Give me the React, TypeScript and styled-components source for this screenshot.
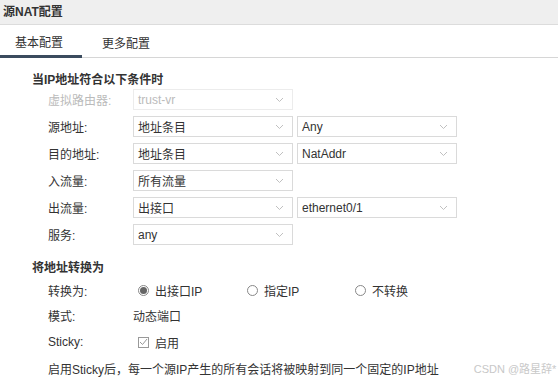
import styled, { createGlobalStyle } from "styled-components";

// 全局样式
const GlobalStyle = createGlobalStyle`
  html, body {
    margin: 0;
    padding: 0;
    background: #fff;
  }
  body {
    font-family: "Liberation Sans", "Noto Sans CJK SC", sans-serif;
    font-size: 12px;
    color: #333;
  }
`;

const Chevron = () => (
  <svg width="9" height="6" viewBox="0 0 9 6">
    <path d="M1 1 L4.5 4.5 L8 1" fill="none" stroke="#c0c0c0" strokeWidth="1" />
  </svg>
);

type SelectProps = { value: string; disabled?: boolean };

function Select({ value, disabled }: SelectProps) {
  return (
    <SelectBox $disabled={disabled}>
      <span>{value}</span>
      <Chevron />
    </SelectBox>
  );
}

export default function App() {
  return (
    <Page>
      <GlobalStyle />
      <Header>源NAT配置</Header>

      <Tabs>
        <Tab $active>基本配置</Tab>
        <Tab>更多配置</Tab>
      </Tabs>

      <Section>
        <SectionTitle>当IP地址符合以下条件时</SectionTitle>
        <FormRows>
          <Row>
            <Label $disabled>虚拟路由器:</Label>
            <Select value="trust-vr" disabled />
          </Row>
          <Row>
            <Label>源地址:</Label>
            <Select value="地址条目" />
            <Select value="Any" />
          </Row>
          <Row>
            <Label>目的地址:</Label>
            <Select value="地址条目" />
            <Select value="NatAddr" />
          </Row>
          <Row>
            <Label>入流量:</Label>
            <Select value="所有流量" />
          </Row>
          <Row>
            <Label>出流量:</Label>
            <Select value="出接口" />
            <Select value="ethernet0/1" />
          </Row>
          <Row>
            <Label>服务:</Label>
            <Select value="any" />
          </Row>
        </FormRows>
      </Section>

      <Section2>
        <SectionTitle>将地址转换为</SectionTitle>
        <TransRow>
          <Label>转换为:</Label>
          <RadioGroup>
            <RadioItem $w={109}>
              <Radio $checked />
              出接口IP
            </RadioItem>
            <RadioItem $w={108}>
              <Radio />
              指定IP
            </RadioItem>
            <RadioItem>
              <Radio />
              不转换
            </RadioItem>
          </RadioGroup>
        </TransRow>
        <TextRow>
          <Label>模式:</Label>
          <Value>动态端口</Value>
        </TextRow>
        <TextRow>
          <Label>Sticky:</Label>
          <CheckItem>
            <Checkbox>
              <svg width="9" height="8" viewBox="0 0 9 8">
                <path d="M1 4 L3.5 6.5 L8 1" fill="none" stroke="#999" strokeWidth="1" />
              </svg>
            </Checkbox>
            启用
          </CheckItem>
        </TextRow>
        <Note>
          <span>启用Sticky后，每一个源IP产生的所有会话将被映射到同一个固定的IP地址</span>
          <Watermark>CSDN @路星辞*</Watermark>
        </Note>
      </Section2>
    </Page>
  );
}

const Page = styled.div`
  width: 558px;
  height: 382px;
  overflow: hidden;
`;

const Header = styled.div`
  height: 25px;
  line-height: 24px;
  background: #efefef;
  border-bottom: 1px solid #dcdcdc;
  box-sizing: border-box;
  padding-left: 3px;
  font-weight: bold;
  color: #333;
`;

const Tabs = styled.div`
  display: flex;
  height: 33px;
  box-sizing: border-box;
  border-bottom: 1px solid #d6d6d6;
  align-items: flex-end;
`;

const Tab = styled.div<{ $active?: boolean }>`
  height: 100%;
  box-sizing: border-box;
  display: flex;
  align-items: center;
  padding: ${({ $active }) => ($active ? "2px 19px 0 15px" : "2px 20px 0 20px")};
  border-bottom: ${({ $active }) => ($active ? "3px solid #3b4b5e" : "none")};
  margin-bottom: ${({ $active }) => ($active ? "-1px" : "0")};
  font-size: 12px;
  color: #333;
`;

const Section = styled.div`
  padding: 14px 0 0 32px;
`;

const Section2 = styled.div`
  padding: 15px 0 0 32px;
`;

const SectionTitle = styled.div`
  font-weight: bold;
  height: 16px;
  line-height: 16px;
`;

const FormRows = styled.div`
  display: flex;
  flex-direction: column;
  gap: 6px;
  margin-top: 1px;
`;

const Row = styled.div`
  display: flex;
  align-items: center;
  gap: 4px;
  height: 21px;
`;

const Label = styled.div<{ $disabled?: boolean }>`
  width: 81px;
  padding-left: 16px;
  color: ${({ $disabled }) => ($disabled ? "#bbb" : "#333")};
  flex-shrink: 0;
`;

const SelectBox = styled.div<{ $disabled?: boolean }>`
  width: 160px;
  height: 21px;
  box-sizing: border-box;
  border: 1px solid ${({ $disabled }) => ($disabled ? "#ececec" : "#dadada")};
  display: flex;
  align-items: center;
  justify-content: space-between;
  padding: 0 8px 0 4px;
  color: ${({ $disabled }) => ($disabled ? "#bbb" : "#333")};
  font-size: 12px;
`;

const TransRow = styled.div`
  display: flex;
  align-items: center;
  gap: 4px;
  height: 22px;
  margin-top: 3px;
`;

const RadioGroup = styled.div`
  display: flex;
  align-items: center;
  padding-left: 5px;
`;

const RadioItem = styled.label<{ $w?: number }>`
  display: flex;
  align-items: center;
  gap: 6px;
  width: ${({ $w }) => ($w ? `${$w}px` : "auto")};
`;

const Radio = styled.span<{ $checked?: boolean }>`
  width: 11px;
  height: 11px;
  box-sizing: border-box;
  border-radius: 50%;
  border: 1px solid #888;
  display: inline-flex;
  align-items: center;
  justify-content: center;
  &::after {
    content: "";
    width: 7px;
    height: 7px;
    border-radius: 50%;
    background: ${({ $checked }) => ($checked ? "#666" : "transparent")};
  }
`;

const TextRow = styled.div`
  display: flex;
  align-items: center;
  gap: 4px;
  height: 26px;
  margin-top: 1px;
`;

const Value = styled.div`
  color: #333;
`;

const CheckItem = styled.label`
  display: flex;
  align-items: center;
  gap: 6px;
  padding-left: 5px;
`;

const Checkbox = styled.span`
  width: 11px;
  height: 11px;
  box-sizing: border-box;
  border: 1px solid #999;
  display: inline-flex;
  align-items: center;
  justify-content: center;
`;

const Note = styled.div`
  display: flex;
  align-items: center;
  height: 26px;
  padding-left: 16px;
`;

const Watermark = styled.span`
  margin-left: 35px;
  color: #c8c8c8;
  font-size: 11px;
`;
